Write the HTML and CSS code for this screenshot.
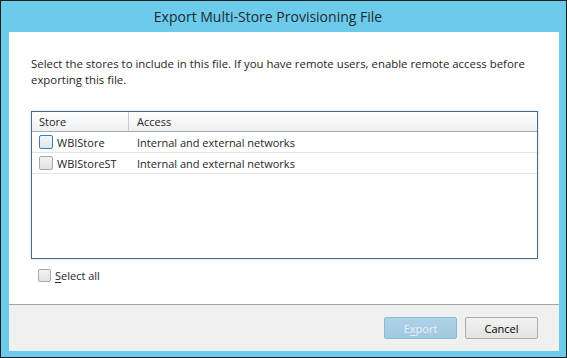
FILE: index.html
```html
<!DOCTYPE html>
<html lang="en">
<head>
  <meta charset="UTF-8" />
  <title>Export Multi-Store Provisioning File</title>
  <link rel="stylesheet" href="styles.css">
</head>
<body>
  <div class="window">
    <div class="titlebar">Export Multi-Store Provisioning File</div>
    <div class="content">
      <div class="main">
        <p class="intro">Select the stores to include in this file. If you have remote users, enable remote access before exporting this file.</p>
        <div class="list">
          <div class="row header">
            <div class="cell store">Store</div>
            <div class="cell access">Access</div>
          </div>
          <div class="row">
            <div class="cell store"><span class="check focused"></span>WBIStore</div>
            <div class="cell access">Internal and external networks</div>
          </div>
          <div class="row">
            <div class="cell store"><span class="check"></span>WBIStoreST</div>
            <div class="cell access">Internal and external networks</div>
          </div>
        </div>
        <label class="select-all"><span class="check"></span><u>S</u>elect all</label>
      </div>
      <div class="footer">
        <button class="btn" disabled>E<u>x</u>port</button>
        <button class="btn">Cancel</button>
      </div>
    </div>
  </div>
</body>
</html>
```

FILE: styles.css
```css
:root {
  --frame: #6ccbeb;
  --text: #262626;
  --font: 'Open Sans', 'Noto Sans', sans-serif;
}
* { margin: 0; padding: 0; box-sizing: border-box; }
body {
  font-family: var(--font);
  font-size: 11px;
  color: var(--text);
  background: #1c1c1c;
}
.window {
  width: 567px;
  height: 358px;
  border: 1px solid #1c1c1c;
  background: var(--frame);
  padding: 0 7px 6px 8px;
  display: flex;
  flex-direction: column;
}
.titlebar {
  height: 31px;
  line-height: 31px;
  text-align: center;
  padding-right: 32px;
  font-size: 14px;
  color: #1d2a30;
}
.content {
  flex-grow: 1;
  display: flex;
  flex-direction: column;
  background: #fff;
}
.main {
  flex-grow: 1;
  padding: 24px 21px 0 22px;
  border-bottom: 1px solid #a5a5a5;
}
.intro {
  font-size: 11.4px;
  line-height: 16px;
  height: 55px;
}
.list {
  height: 148px;
  border: 1px solid #48698c;
  box-shadow: 0 0 2px rgba(72, 105, 140, 0.35);
}
.row {
  display: flex;
  height: 21px;
  border-bottom: 1px solid #e3e3e3;
  align-items: center;
}
.row.header {
  height: 20px;
  background: linear-gradient(#fff, #eef0f2);
  border-bottom: 1px solid #a3aab2;
}
.cell {
  display: flex;
  align-items: center;
  height: 100%;
  padding-left: 7px;
}
.cell.store { width: 97px; }
.header .cell.store { border-right: 1px solid #c6cbd1; }
.cell.access { padding-left: 8px; }
.check {
  width: 14px;
  height: 14px;
  margin-right: 4px;
  border: 1px solid #a7a7a7;
  border-radius: 2px;
  background: linear-gradient(#f4f4f4, #e2e2e2);
  flex-shrink: 0;
}
.check.focused {
  border-color: #3d7bb0;
  background: linear-gradient(#f2f6fa, #dfe6ee);
}
.select-all {
  display: flex;
  align-items: center;
  margin-top: 8px;
  margin-left: 7px;
  height: 16px;
}
.select-all .check { width: 13px; height: 13px; }
.footer {
  height: 46px;
  background: #f0f0f0;
  display: flex;
  justify-content: flex-end;
  gap: 8px;
  padding: 12px 21px 0 0;
}
.btn {
  width: 73px;
  height: 22px;
  font-family: var(--font);
  font-size: 11px;
  color: #000;
  border: 1px solid #acacac;
  border-radius: 2px;
  background: linear-gradient(#f2f2f2, #e3e3e3);
}
.btn:disabled {
  color: #e6f1f7;
  border-color: #8fbad3;
  background: linear-gradient(#aed3e8, #a2c9e0);
}
u { text-decoration-thickness: 1px; text-underline-offset: 2px; }
```
